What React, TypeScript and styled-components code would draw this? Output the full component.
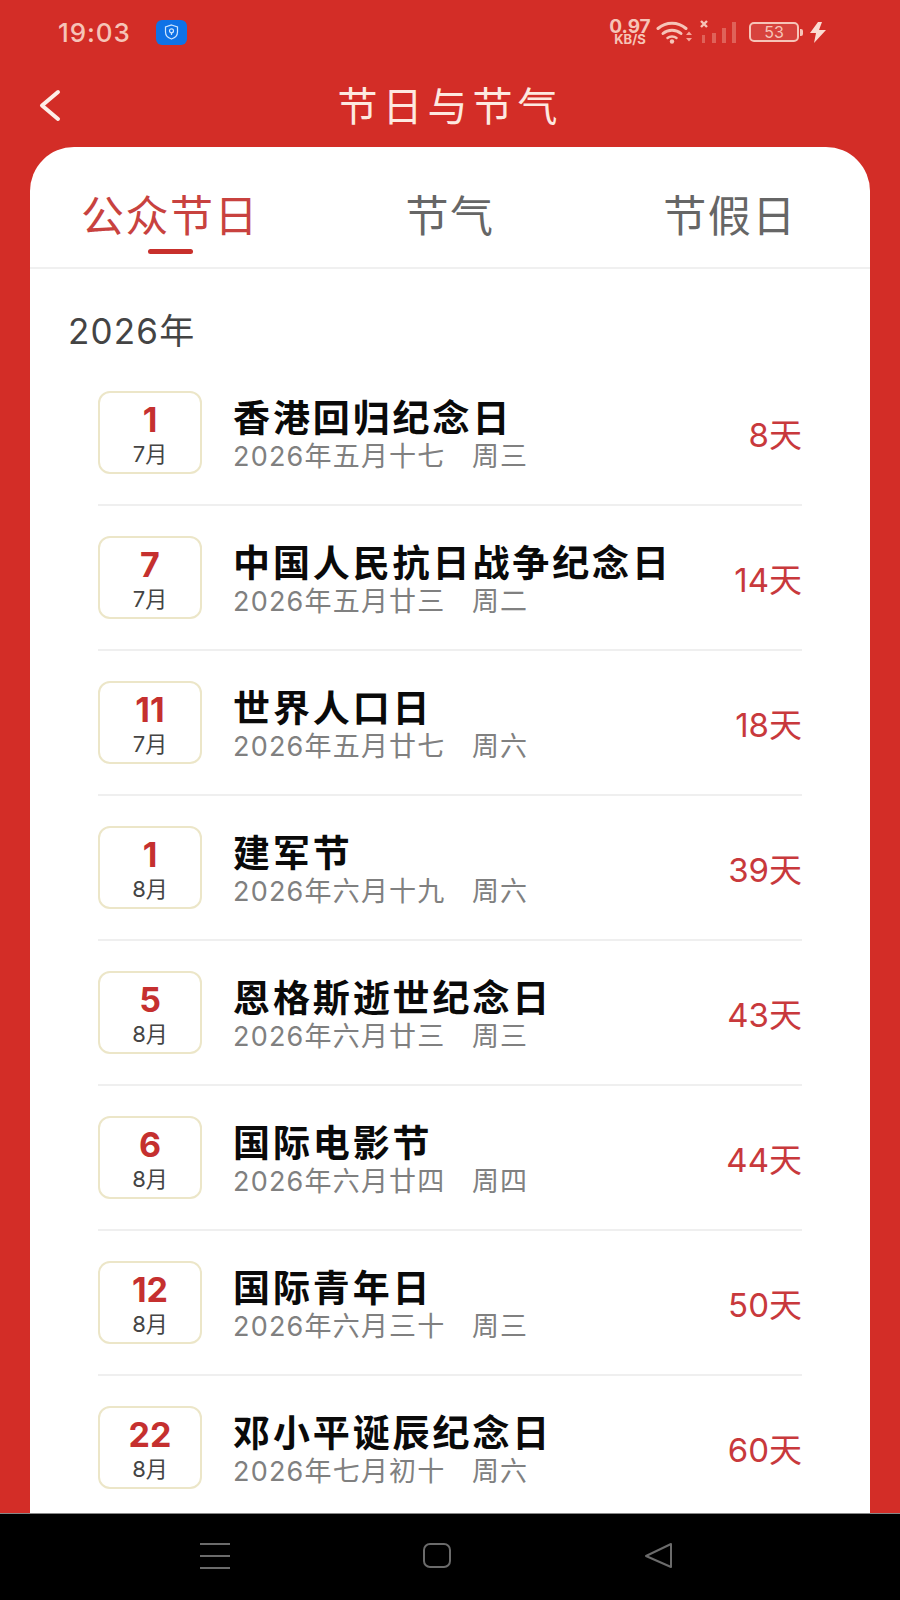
import React, { FC } from 'react'
import styled, { createGlobalStyle } from 'styled-components'

const FONT = 'Inter, "Noto Sans CJK SC", sans-serif'
const RED = '#d32d27'

const GlobalStyle = createGlobalStyle`
    html, body {
        margin: 0;
        padding: 0;
        background: ${RED};
    }
    * {
        box-sizing: border-box;
    }
`

const Page = styled.div`
    width: 900px;
    height: 1600px;
    display: flex;
    flex-direction: column;
    overflow: hidden;
    background: ${RED};
    font-family: ${FONT};
`

const StatusBar = styled.div`
    height: 64px;
    flex: none;
    display: flex;
    align-items: center;
    justify-content: space-between;
    padding: 0 74px 0 58px;
    color: #f6c4b8;
`

const StatusGroup = styled.div`
    display: flex;
    align-items: center;
`

const Time = styled.span`
    font-size: 26px;
    font-weight: 500;
    letter-spacing: 0.9px;
    margin-right: 25px;
`

const Badge = styled.div`
    width: 31px;
    height: 25px;
    border-radius: 6px;
    background: #0f72e6;
    display: flex;
    align-items: center;
    justify-content: center;
`

const Speed = styled.div`
    display: flex;
    flex-direction: column;
    align-items: center;
    width: 44px;
    margin-right: 4px;
    font-weight: 700;
`

const SpeedValue = styled.span`
    font-size: 19px;
    line-height: 14px;
`

const SpeedUnit = styled.span`
    font-size: 13px;
    line-height: 11px;
`

const Battery = styled.div`
    width: 50px;
    height: 20px;
    margin-left: 12px;
    border: 2px solid #f6c4b8;
    border-radius: 5px;
    background: rgba(255, 255, 255, 0.1);
    font-size: 16px;
    line-height: 16px;
    text-align: center;
`

const BatteryCap = styled.div`
    width: 3px;
    height: 7px;
    margin: 0 7px 0 1px;
    border-radius: 0 2px 2px 0;
    background: #f6c4b8;
`

const SignalGraphic = styled.svg`
    margin-left: 8px;
`

const Header = styled.div`
    position: relative;
    height: 83px;
    flex: none;
    display: flex;
    align-items: center;
    justify-content: center;
`

const BackButton = styled.div`
    position: absolute;
    left: 38px;
    top: 25px;
    display: flex;
`

const Title = styled.h1`
    margin: 0 0 4px;
    font-size: 40px;
    font-weight: 400;
    letter-spacing: 5px;
    color: #fde9e0;
`

const Card = styled.main`
    flex: 1;
    min-height: 0;
    margin: 0 30px;
    border-radius: 44px 44px 0 0;
    background: #fff;
    overflow: hidden;
`

const Tabs = styled.div`
    height: 122px;
    display: grid;
    grid-template-columns: repeat(3, 1fr);
    border-bottom: 2px solid #f0f0f0;
`

const Tab = styled.div<{ $active?: boolean }>`
    position: relative;
    display: flex;
    justify-content: center;
    padding-top: 40px;
    font-size: 43px;
    line-height: 58px;
    letter-spacing: 1.5px;
    color: ${p => (p.$active ? '#c8423f' : '#666')};

    &::after {
        content: '';
        display: ${p => (p.$active ? 'block' : 'none')};
        position: absolute;
        left: 50%;
        top: 102px;
        width: 45px;
        height: 5px;
        margin-left: -22px;
        border-radius: 3px;
        background: #c8302c;
    }
`

const Year = styled.div`
    padding: 42px 0 0 38px;
    height: 92px;
    font-size: 35px;
    line-height: 40px;
    letter-spacing: 1.2px;
    color: #444;
`

const List = styled.div`
    padding: 0 68px;
`

const Row = styled.div`
    height: 145px;
    display: flex;
    align-items: center;
    border-bottom: 2px solid #efefef;
`

const DateBox = styled.div`
    flex: none;
    width: 104px;
    height: 83px;
    border: 2px solid #ece6c8;
    border-radius: 12px;
    display: flex;
    flex-direction: column;
    align-items: center;
    padding-top: 8px;
`

const Day = styled.span`
    font-size: 34px;
    line-height: 38px;
    font-weight: 700;
    color: #c5302f;
`

const Month = styled.span`
    font-size: 22px;
    line-height: 30px;
    color: #444;
`

const Info = styled.div`
    flex: 1;
    margin-left: 31px;
    padding-top: 7px;
    min-width: 0;
`

const Name = styled.div`
    font-size: 37px;
    line-height: 42px;
    font-weight: 700;
    letter-spacing: 2.9px;
    color: #0a0a0a;
`

const Lunar = styled.div`
    font-size: 27px;
    line-height: 34px;
    letter-spacing: 1.2px;
    color: #808080;
    white-space: pre;
`

const Remain = styled.div`
    flex: none;
    font-size: 33px;
    color: #c8393c;
`

const NavBar = styled.nav`
    height: 87px;
    flex: none;
    display: flex;
    align-items: flex-start;
    justify-content: center;
    gap: 192px;
    padding: 28px 26px 0 0;
    background: #000;
    border-top: 1px solid #888;
`

interface Festival {
    day: number
    month: string
    name: string
    lunar: string
    remain: string
}

const festivals: Festival[] = [
    { day: 1, month: '7月', name: '香港回归纪念日', lunar: '2026年五月十七   周三', remain: '8天' },
    { day: 7, month: '7月', name: '中国人民抗日战争纪念日', lunar: '2026年五月廿三   周二', remain: '14天' },
    { day: 11, month: '7月', name: '世界人口日', lunar: '2026年五月廿七   周六', remain: '18天' },
    { day: 1, month: '8月', name: '建军节', lunar: '2026年六月十九   周六', remain: '39天' },
    { day: 5, month: '8月', name: '恩格斯逝世纪念日', lunar: '2026年六月廿三   周三', remain: '43天' },
    { day: 6, month: '8月', name: '国际电影节', lunar: '2026年六月廿四   周四', remain: '44天' },
    { day: 12, month: '8月', name: '国际青年日', lunar: '2026年六月三十   周三', remain: '50天' },
    { day: 22, month: '8月', name: '邓小平诞辰纪念日', lunar: '2026年七月初十   周六', remain: '60天' },
]

const ShieldIcon = () => (
    <svg width="15" height="16" viewBox="0 0 15 16" fill="none" stroke="#cfe6ff" strokeWidth="1.2">
        <path d="M7.5 1 L13.5 3 V8 C13.5 11.5 10.5 14 7.5 15 C4.5 14 1.5 11.5 1.5 8 V3 Z" />
        <circle cx="7.5" cy="6.8" r="2" />
        <path d="M7.5 8.8 V11" />
    </svg>
)

const WifiIcon = () => (
    <svg width="36" height="24" viewBox="0 0 36 24" fill="none" stroke="#f6c4b8" strokeLinecap="round">
        <path d="M2 8.5 C10 1.5 22 1.5 30 8.5" strokeWidth="3" />
        <path d="M7 13.5 C12 9 20 9 25 13.5" strokeWidth="3" />
        <path d="M11.5 18 C14 16 18 16 20.5 18" strokeWidth="2.5" />
        <circle cx="16" cy="21.5" r="2.2" fill="#f6c4b8" stroke="none" />
        <path d="M30 15 L36 15 L33 11.5 Z M30 18 L36 18 L33 21.5 Z" fill="#f6a59a" stroke="none" />
    </svg>
)

const SignalIcon = () => (
    <SignalGraphic width="37" height="24" viewBox="0 0 37 24">
        <path d="M1 1 L7 7 M7 1 L1 7" stroke="#f6c4b8" strokeWidth="2.4" />
        <g fill="#f6c4b8" opacity="0.35">
            <rect x="2" y="15" width="3" height="8" />
            <rect x="12" y="13" width="4" height="10" />
            <rect x="22" y="8" width="4" height="15" />
            <rect x="32" y="2" width="4" height="21" />
        </g>
    </SignalGraphic>
)

const BoltIcon = () => (
    <svg width="16" height="21" viewBox="0 0 16 21" fill="#fbdcd2">
        <path d="M8 0 L0 11 H6 L4 21 L16 8 H9 L12 0 Z" />
    </svg>
)

const BackIcon = () => (
    <svg width="24" height="34" viewBox="0 0 24 34" fill="none" stroke="#fdeee8" strokeWidth="4" strokeLinecap="round" strokeLinejoin="round">
        <path d="M20 3 L4 16.5 L20 30" />
    </svg>
)

const MenuIcon = () => (
    <svg width="30" height="28" viewBox="0 0 30 28" stroke="#6b6b6b" strokeWidth="2">
        <path d="M0 2 H30 M0 14 H30 M0 26 H30" />
    </svg>
)

const HomeIcon = () => (
    <svg width="30" height="28" viewBox="0 0 30 28" fill="none" stroke="#6b6b6b" strokeWidth="2">
        <rect x="2" y="2" width="26" height="23" rx="6" />
    </svg>
)

const ReturnIcon = () => (
    <svg width="30" height="28" viewBox="0 0 30 28" fill="none" stroke="#6b6b6b" strokeWidth="2" strokeLinejoin="round">
        <path d="M27 2 V25 L2 14 Z" />
    </svg>
)

const FestivalRow: FC<{ item: Festival }> = ({ item }) => (
    <Row>
        <DateBox>
            <Day>{item.day}</Day>
            <Month>{item.month}</Month>
        </DateBox>
        <Info>
            <Name>{item.name}</Name>
            <Lunar>{item.lunar}</Lunar>
        </Info>
        <Remain>{item.remain}</Remain>
    </Row>
)

export default function App() {
    return (
        <Page>
            <GlobalStyle />
            <StatusBar>
                <StatusGroup>
                    <Time>19:03</Time>
                    <Badge>
                        <ShieldIcon />
                    </Badge>
                </StatusGroup>
                <StatusGroup>
                    <Speed>
                        <SpeedValue>0.97</SpeedValue>
                        <SpeedUnit>KB/S</SpeedUnit>
                    </Speed>
                    <WifiIcon />
                    <SignalIcon />
                    <Battery>53</Battery>
                    <BatteryCap />
                    <BoltIcon />
                </StatusGroup>
            </StatusBar>
            <Header>
                <BackButton>
                    <BackIcon />
                </BackButton>
                <Title>节日与节气</Title>
            </Header>
            <Card>
                <Tabs>
                    <Tab $active>公众节日</Tab>
                    <Tab>节气</Tab>
                    <Tab>节假日</Tab>
                </Tabs>
                <Year>2026年</Year>
                <List>
                    {festivals.map(item => (
                        <FestivalRow key={item.name} item={item} />
                    ))}
                </List>
            </Card>
            <NavBar>
                <MenuIcon />
                <HomeIcon />
                <ReturnIcon />
            </NavBar>
        </Page>
    )
}
